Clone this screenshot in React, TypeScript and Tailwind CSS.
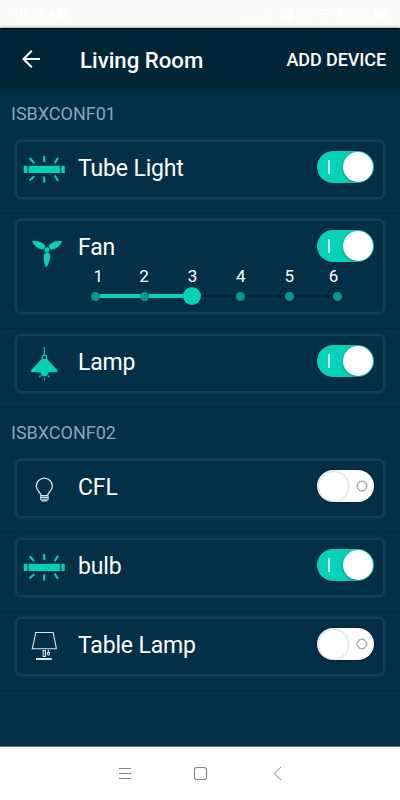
import { ReactNode, useState } from 'react'
import clsx from 'clsx'

type DeviceKind = 'tube' | 'fan' | 'pendant' | 'cfl' | 'tableLamp'

interface Device {
  id: string
  name: string
  kind: DeviceKind
  on: boolean
  speed?: number
}

interface Board {
  id: string
  devices: Device[]
}

const initialBoards: Board[] = [
  {
    id: 'ISBXCONF01',
    devices: [
      { id: 'd1', name: 'Tube Light', kind: 'tube', on: true },
      { id: 'd2', name: 'Fan', kind: 'fan', on: true, speed: 3 },
      { id: 'd3', name: 'Lamp', kind: 'pendant', on: true },
    ],
  },
  {
    id: 'ISBXCONF02',
    devices: [
      { id: 'd4', name: 'CFL', kind: 'cfl', on: false },
      { id: 'd5', name: 'bulb', kind: 'tube', on: true },
      { id: 'd6', name: 'Table Lamp', kind: 'tableLamp', on: false },
    ],
  },
]

const SPEEDS = [1, 2, 3, 4, 5, 6]

// every icon is drawn on the same 44x44 box
const icons: Record<DeviceKind, ReactNode> = {
  tube: (
    <>
      <g fill="currentColor">
        <rect x="1.8" y="18.8" width="3.4" height="7.2" rx="0.6" />
        <rect x="6.8" y="18.8" width="31" height="7.2" />
        <rect x="39.4" y="18.8" width="3.4" height="7.2" rx="0.6" />
        <rect x="5" y="19.6" width="34" height="5.6" opacity="0.35" />
      </g>
      <path
        d="M22.2 9.8v4.4M22.2 30.2v4.6M8.3 11.8l3.3 3.7M35.5 11.5l-2.4 4M8.3 32.8l3.3-3.1M35.5 33l-2.4-3.8"
        stroke="currentColor"
        strokeWidth="2.1"
        strokeLinecap="round"
        fill="none"
      />
    </>
  ),
  fan: (
    <g fill="currentColor" transform="translate(0 4)">
      <circle cx="25" cy="19.8" r="2.6" />
      <path d="M10 11.2c4.5-.8 10.200.300 13.100 4.400.3 1-.9 3.700-2 3.900-4.200-.1-9.200-3.700-11.100-8.300z" />
      <path d="M40.200 11.200c-4.500-.8-10.300.300-13.200 4.400-.4 1.300.9 3.500 2.100 3.900 4.300 0 9.100-3.600 11.100-8.300z" />
      <path d="M23.300 22.800h3.400c1 1 1.500 2.300 1.400 3.600-.1 4.200-1.600 7.600-3.600 10.700-.9.100-1.200-.4-1.300-.9-.9-3.400-1.700-6.700-1.500-10.200.1-1.200.7-2.300 1.600-3.200z" />
    </g>
  ),
  pendant: (
    <g transform="translate(0 -0.5)">
      <path d="M22.300 6.500v9" stroke="currentColor" strokeWidth="1.100" />
      <path d="M20.200 19v-2.200a2.200 2.200 0 014.400 0V19" stroke="currentColor" strokeWidth="1.200" fill="none" />
      <path d="M19.600 18.500h5.400l10.500 11.300q.4 1.900-.6 1.900H9.700q-1.100 0-.6-1.900z" fill="currentColor" />
      <path d="M18.300 31h8.200c0 3-1.700 5-4.100 5s-4.100-2-4.100-5z" fill="currentColor" />
      <path
        d="M18.500 35.500l-.8.900M26.300 35.500l.8.900M22.400 38v1.300"
        stroke="currentColor"
        strokeWidth="1.300"
        strokeLinecap="round"
      />
    </g>
  ),
  cfl: (
    <g fill="none" stroke="currentColor" strokeLinejoin="round" transform="translate(0 4.2)">
      <path
        d="M19 25.500c-.2-3.600-4.700-4.700-4.700-9.500a8 8 0 0116 0c0 4.800-4.500 5.900-4.700 9.500z"
        strokeWidth="1.200"
      />
      <path d="M18.500 27.200h7.800M18.500 29h7.800M19.400 30.700h6" strokeWidth="1.100" />
      <path d="M18.500 25.500v4.200M26.200 25.500v4.200" strokeWidth="0.800" />
    </g>
  ),
  tableLamp: (
    <g fill="none" stroke="currentColor" transform="translate(0 0.8)">
      <path d="M13.800 7.700h17.400l3.200 16.300H10.300z" strokeWidth="1.100" />
      <path d="M21.200 25.700h2.200v6h-2.200z" strokeWidth="1.100" />
      <path d="M26.400 25v2.500" strokeWidth="1" />
      <ellipse cx="26.400" cy="28.800" rx="1.100" ry="1.500" strokeWidth="1.100" />
      <path d="M14 34.200h15.800" strokeWidth="2" />
    </g>
  ),
}

function DeviceIcon({ kind, on }: { kind: DeviceKind; on: boolean }) {
  return (
    <svg viewBox="0 0 44 44" className={clsx('size-[44px] shrink-0', on ? 'text-[#06d2b8]' : 'text-[#dde6eb]')}>
      {icons[kind]}
    </svg>
  )
}

function Toggle({ on, label, onChange }: { on: boolean; label: string; onChange: () => void }) {
  return (
    <button
      type="button"
      role="switch"
      aria-checked={on}
      aria-label={label}
      onClick={onChange}
      className={clsx(
        'mt-[9px] flex h-[32px] w-[57px] shrink-0 items-center justify-between rounded-full shadow-[0_0_1px_1px_#04113f66]',
        on ? 'bg-[#06d2b8] pr-[1.5px] pl-[11px]' : 'bg-white pr-[7px] pl-[1.5px]'
      )}
    >
      {on ? (
        <>
          <span className="h-[14px] w-[2px] bg-[#c9f6ef]" />
          <span className="size-[29.5px] rounded-full bg-white shadow-[0_1px_3px_#00000055]" />
        </>
      ) : (
        <>
          <span className="size-[29px] rounded-full bg-white shadow-[0_0_3px_#00000050]" />
          <span className="size-[10px] rounded-full border-[1.5px] border-[#a3a3a3] ring-[0.5px] ring-[#a3a3a3]" />
        </>
      )}
    </button>
  )
}

function SpeedSlider({ value, onChange }: { value: number; onChange: (v: number) => void }) {
  return (
    <div className="-mt-px ml-[54.5px] w-[291px]">
      <div className="flex">
        {SPEEDS.map(s => (
          <span
            key={s}
            className={clsx('w-[48.4px] shrink-0 text-center text-[17px] leading-[20px] text-white', s === 1 && 'pl-[5px]', s === 6 && 'pr-[8px]')}
          >
            {s}
          </span>
        ))}
      </div>
      <div className="flex h-[20px] items-center">
        {SPEEDS.map(s => (
          <button key={s} type="button" aria-label={`Speed ${s}`} onClick={() => onChange(s)} className="flex h-full w-[48.4px] shrink-0 items-center">
            <span className={clsx('flex-1', s === 1 ? 'h-0' : s <= value ? 'h-[4px] bg-[#06d2b8]' : 'h-[2px] bg-[#02243a]')} />
            <span
              className={clsx(
                'shrink-0 rounded-full',
                s === value ? 'size-[18px] bg-[#06d2b8]' : 'size-[9px] bg-[#049a8b]'
              )}
            />
            <span className={clsx('flex-1', s === 6 ? 'h-0' : s < value ? 'h-[4px] bg-[#06d2b8]' : 'h-[2px] bg-[#02243a]')} />
          </button>
        ))}
      </div>
    </div>
  )
}

interface DeviceRowProps {
  device: Device
  onToggle: () => void
  onSpeed: (v: number) => void
}

function DeviceRow({ device, onToggle, onSpeed }: DeviceRowProps) {
  const hasSpeed = device.speed !== undefined
  return (
    <div className={clsx('border-b border-[#022840] px-4 pt-[6px]', hasSpeed ? 'h-[115px]' : 'h-[79px]')}>
      <div
        className={clsx(
          'rounded-[5px] border border-[#164159] bg-[#032f47] shadow-[0_0_3px_1px_#1b475e]',
          hasSpeed ? 'h-[93px]' : 'h-[57px]'
        )}
      >
        <div className="flex h-[46px] items-start pr-[9px] pl-[5px]">
          <div className="mt-[5px]">
            <DeviceIcon kind={device.kind} on={device.on} />
          </div>
          <span className="mt-[12px] ml-[12px] flex-1 text-[23px] leading-[30px] tracking-[-0.15px] text-white">{device.name}</span>
          <Toggle on={device.on} label={device.name} onChange={onToggle} />
        </div>
        {hasSpeed && <SpeedSlider value={device.speed ?? 1} onChange={onSpeed} />}
      </div>
    </div>
  )
}

function StatusBar() {
  return (
    <div className="flex h-[28px] items-center justify-between bg-[#fafafa] pr-[11px] pl-[12px] text-[13px] text-white">
      <span className="font-medium">10:14 AM</span>
      <div className="flex items-center">
        <span className="mr-[5px] font-bold tracking-[1px]">...</span>
        <svg viewBox="0 0 14 12" className="mr-[7px] h-[12px] w-[14px] opacity-50" fill="currentColor">
          <path d="M0 10h2v2H0zM3 8h2v4H3zM6 6h2v6H6zM9 3h2v9H9zM12 0h2v12h-2z" />
        </svg>
        <svg viewBox="0 0 14 12" className="mr-[6px] h-[12px] w-[14px]" fill="currentColor">
          <path d="M0 10h2v2H0zM3 8h2v4H3zM6 6h2v6H6zM9 3h2v9H9zM12 0h2v12h-2z" />
        </svg>
        <span className="mr-[7px] flex flex-col items-center text-[6px] leading-[8px] font-bold">
          <span>Vo</span>
          <span>LTE</span>
        </span>
        <svg viewBox="0 0 14 12" className="mr-[7px] h-[12px] w-[14px]" fill="none" stroke="currentColor" strokeWidth="1.5">
          <path d="M.5 4.500a9 9 0 0113 0M3 7.200a5.600 5.600 0 018 0M5.300 9.700a2.300 2.300 0 013.400 0" />
        </svg>
        <span className="mr-[4px] text-[12px] font-medium">56%</span>
        <span className="flex h-[11px] w-[26px] items-center justify-end rounded-full border border-white pr-[2px]">
          <span className="h-[7px] w-[12px] rounded-[2px] bg-white" />
        </span>
      </div>
    </div>
  )
}

function NavBar() {
  return (
    <div className="flex h-[54px] items-center border-t border-[#66788a] bg-white text-[#858585]">
      <svg viewBox="0 0 400 53" className="h-[53px] w-full" fill="none" stroke="currentColor" strokeWidth="1">
        <path d="M119 21.500h12M119 26.500h12M119 31.500h12" />
        <rect x="194.500" y="20.500" width="12" height="12" rx="2.200" strokeWidth="1.200" />
        <path d="M281 20l-7 6.500 7 6.500" />
      </svg>
    </div>
  )
}

export default function App() {
  const [boards, setBoards] = useState<Board[]>(initialBoards)

  const updateDevice = (id: string, patch: Partial<Device>) => {
    setBoards(prev =>
      prev.map(b => ({
        ...b,
        devices: b.devices.map(d => (d.id === id ? { ...d, ...patch } : d)),
      }))
    )
  }

  return (
    <div className="flex h-[800px] w-[400px] flex-col overflow-hidden bg-[#013048] font-[Roboto,sans-serif]">
      <StatusBar />
      <header className="flex h-[63px] shrink-0 items-center border-t border-black bg-[#002536] pr-[14px] pl-[21px] text-white shadow-[0_0_3px_#00253699]">
        <button type="button" aria-label="Back" className="-mt-[2px]">
          <svg viewBox="0 0 20 20" className="size-[20px]" fill="none" stroke="currentColor" strokeWidth="2">
            <path d="M19 10H2.500M10.800 1.800L2.500 10l8.300 8.200" />
          </svg>
        </button>
        <h1 className="ml-[39px] flex-1 text-[22.2px] leading-[28px] font-medium">Living Room</h1>
        <button type="button" className="text-[18px] leading-[24px] font-medium tracking-[-0.1px]">
          ADD DEVICE
        </button>
      </header>
      <main className="flex-1">
        {boards.map((board, i) => (
          <section key={board.id}>
            <h2
              className={clsx(
                'pl-[11px] text-[18px] leading-[24px] text-[#8ea3b0]',
                i === 0 ? 'h-[44px] pt-[11px]' : 'h-[46px] pt-[13px]'
              )}
            >
              {board.id}
            </h2>
            {board.devices.map(device => (
              <DeviceRow
                key={device.id}
                device={device}
                onToggle={() => updateDevice(device.id, { on: !device.on })}
                onSpeed={speed => updateDevice(device.id, { speed })}
              />
            ))}
          </section>
        ))}
      </main>
      <NavBar />
    </div>
  )
}
